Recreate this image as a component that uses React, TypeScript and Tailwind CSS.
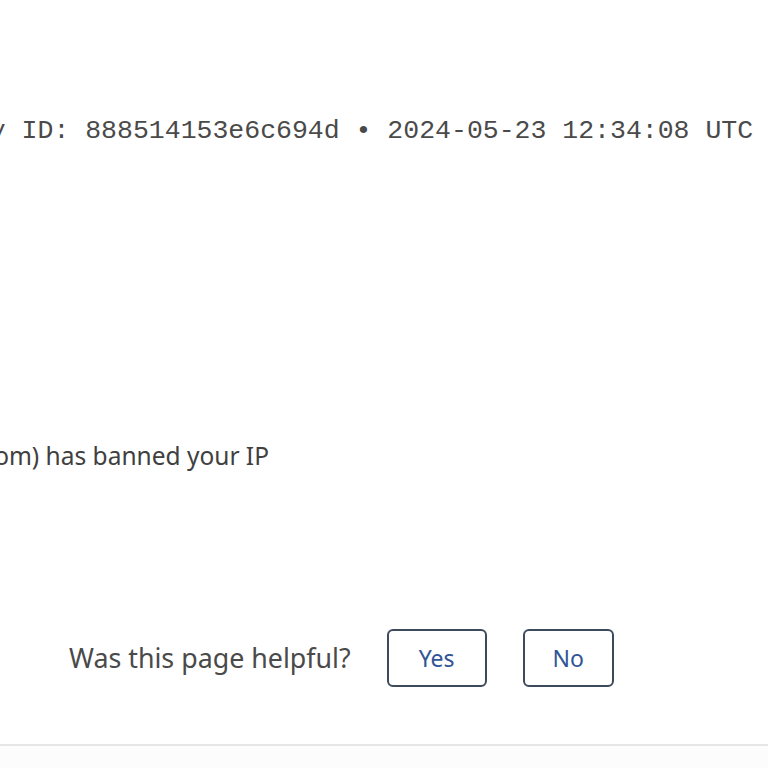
export default function App() {
  return (
    <div className="w-[768px] h-[768px] overflow-hidden bg-white flex flex-col text-[#404040] font-['Segoe_UI','Noto_Sans',sans-serif]">
      {/* ray id heading */}
      <div className="pt-[115px] -ml-[42px] whitespace-nowrap font-['Liberation_Mono','Courier_New',monospace] text-[26.5px] leading-[32px] text-[#4a4a4a]">
        Ray ID: 888514153e6c694d • 2024-05-23 12:34:08 UTC
      </div>

      {/* message, cropped on the left */}
      <div className="mt-[293px] w-[269px] flex justify-end">
        <p className="whitespace-nowrap text-[24.5px] leading-[32px] text-[#404040]">
          The owner of this website (example.com) has banned your IP
        </p>
      </div>

      {/* feedback */}
      <div className="mt-[157px] flex items-center pl-[69px]">
        <span className="text-[26.8px] leading-[58px] text-[#4a4a4a] mr-[36px]">Was this page helpful?</span>
        <button className="w-[100px] h-[58px] rounded-[6px] border-2 border-[#3d4a5c] text-[23px] text-[#2f5596] bg-white">
          Yes
        </button>
        <button className="ml-[36px] w-[91px] h-[58px] rounded-[6px] border-2 border-[#3d4a5c] text-[23px] text-[#2f5596] bg-white">
          No
        </button>
      </div>

      <div className="mt-[57px] flex-1 border-t-2 border-[#e6e6e6] bg-[#fcfcfc]" />
    </div>
  )
}
